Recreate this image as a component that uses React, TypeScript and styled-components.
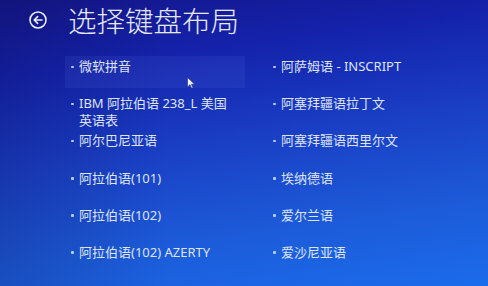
import React from "react";
import styled, { createGlobalStyle } from "styled-components";

const GlobalStyle = createGlobalStyle`
  html, body { margin: 0; padding: 0; }
  body { width: 488px; height: 286px; overflow: hidden; background: #1530b8; }
`;

const Page = styled.div`
  position: relative;
  width: 488px;
  height: 286px;
  box-sizing: border-box;
  overflow: hidden;
  background:
    linear-gradient(90deg, rgba(10, 10, 60, 0.18) 0%, rgba(10, 10, 60, 0) 35%),
    linear-gradient(172deg, #14168a 0%, #1422ab 22%, #1a40c6 50%, #1c5ad8 75%, #1b6cec 100%);
  font-family: "Noto Sans", "Noto Sans CJK SC", sans-serif;
  color: #dfe4f3;
`;

const Header = styled.header`
  display: flex;
  align-items: center;
  height: 40px;
  padding: 0 0 0 29px;
  gap: 21px;
`;

const BackButton = styled.button`
  display: flex;
  align-items: center;
  justify-content: center;
  width: 18px;
  height: 18px;
  padding: 0;
  border: none;
  background: transparent;
  color: #e8ebf6;
`;

const Title = styled.h1`
  margin: 0;
  font-family: "Noto Sans CJK SC", sans-serif;
  font-weight: 300;
  font-size: 28.5px;
  line-height: 28px;
  color: #e6e9f5;
`;

const List = styled.ul`
  list-style: none;
  margin: 16px 0 0 65px;
  padding: 0;
  display: grid;
  grid-template-columns: 180px 180px;
  grid-template-rows: repeat(6, 37.2px);
  grid-auto-flow: column;
  column-gap: 22px;
`;

const Item = styled.li<{ $selected?: boolean }>`
  display: flex;
  align-items: flex-start;
  align-self: start;
  box-sizing: border-box;
  height: ${(p) => (p.$selected ? "32px" : "auto")};
  padding: 2px 0 0 6px;
  background: ${(p) => (p.$selected ? "rgba(120, 150, 255, 0.09)" : "transparent")};
  font-size: 13px;
  line-height: 17px;
`;

const Bullet = styled.span`
  flex: none;
  width: 2.5px;
  height: 2.5px;
  margin: 7.5px 5.5px 0 0;
  border-radius: 1px;
  background: #b4cdff;
`;

const Label = styled.span`
  max-width: 152px;
  font-family: "Noto Sans", "Noto Sans CJK SC", sans-serif;
  white-space: normal;
`;

const Cursor = styled.svg`
  position: absolute;
  left: 187px;
  top: 77px;
`;

const items = [
  "微软拼音",
  "IBM 阿拉伯语 238_L 美国英语表",
  "阿尔巴尼亚语",
  "阿拉伯语(101)",
  "阿拉伯语(102)",
  "阿拉伯语(102) AZERTY",
  "阿萨姆语 - INSCRIPT",
  "阿塞拜疆语拉丁文",
  "阿塞拜疆语西里尔文",
  "埃纳德语",
  "爱尔兰语",
  "爱沙尼亚语",
];

export default function App() {
  return (
    <>
      <GlobalStyle />
      <Page>
        <Header>
          <BackButton aria-label="返回">
            <svg width="18" height="18" viewBox="0 0 18 18" fill="none">
              <circle cx="9" cy="9" r="8" stroke="currentColor" strokeWidth="1.6" />
              <path d="M13 9H5.3M8.6 5.6L5.2 9l3.4 3.4" stroke="currentColor" strokeWidth="1.6" strokeLinecap="round" strokeLinejoin="round" />
            </svg>
          </BackButton>
          <Title>选择键盘布局</Title>
        </Header>
        <List>
          {items.map((t, i) => (
            <Item key={t} $selected={i === 0}>
              <Bullet />
              <Label>{t}</Label>
            </Item>
          ))}
        </List>
        <Cursor width="8" height="12" viewBox="0 0 8 12">
          <path d="M0.5 0.5V10L3 7.7 4.6 11.3 6 10.7 4.4 7.2H7.6Z" fill="#f4f6ff" stroke="#1a2a80" strokeWidth="0.6" />
        </Cursor>
      </Page>
    </>
  );
}
